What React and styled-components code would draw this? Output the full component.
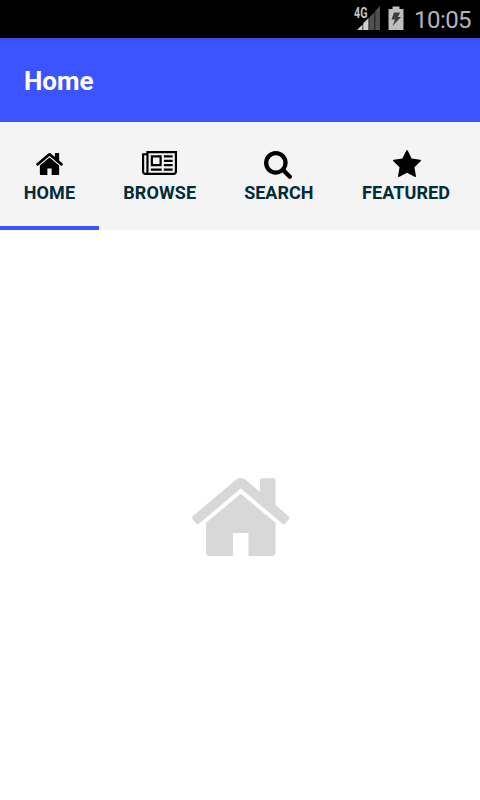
import React from "react";
import styled, { createGlobalStyle } from "styled-components";

const GlobalStyle = createGlobalStyle`
  * { box-sizing: border-box; }
  body { margin: 0; background: #fff; font-family: Roboto, sans-serif; overflow: hidden; }
`;

const Screen = styled.div`
  width: 480px;
  height: 800px;
  display: flex;
  flex-direction: column;
  background: #fff;
`;

const StatusBar = styled.div`
  height: 38px;
  flex: none;
  background: #000;
  display: flex;
  justify-content: flex-end;
  padding: 5px 9px 0 0;
`;

const SignalIcon = styled.svg`
  width: 28px;
  height: 26px;
  margin-right: 7px;
`;

const BatteryIcon = styled.svg`
  width: 16px;
  height: 26px;
  margin-right: 10px;
`;

const Clock = styled.span`
  width: 57px;
  font-size: 24px;
  line-height: 30px;
  letter-spacing: -0.55px;
  white-space: nowrap;
  color: #b4b4b4;
`;

const AppBar = styled.header`
  height: 84px;
  flex: none;
  display: flex;
  align-items: center;
  padding: 1px 24px 0;
  background: linear-gradient(#354ae0 0, #3a50f2 2px, #3c54ff 6px);
`;

const Title = styled.h1`
  margin: 0;
  font-size: 26px;
  line-height: 32px;
  font-weight: 700;
  color: #fff;
`;

const Tabs = styled.nav`
  height: 108px;
  flex: none;
  display: flex;
  overflow: hidden;
  background: #f4f4f4;
`;

const Tab = styled.div`
  width: ${(p) => p.$width}px;
  flex: none;
  display: flex;
  flex-direction: column;
  align-items: center;
  border-bottom: 4px solid ${(p) => (p.$active ? "#3c54ff" : "transparent")};
`;

const IconSlot = styled.div`
  height: 60px;
  padding: ${(p) => p.$top}px 0 0 ${(p) => p.$left || 0}px;
`;

const Glyph = styled.svg`
  display: block;
  width: ${(p) => p.$w}px;
  height: ${(p) => p.$h}px;
  fill: ${(p) => p.$color || "#000"};
`;

const Label = styled.span`
  font-size: 18px;
  line-height: 22px;
  font-weight: 700;
  letter-spacing: ${(p) => p.$spacing}px;
  padding-left: ${(p) => p.$left || 0}px;
  color: #022c38;
`;

const Content = styled.main`
  flex: 1;
  display: flex;
  justify-content: center;
  padding: 247.5px 0 0 0.5px;
`;

const icons = {
  home: {
    box: "89 253 1614 1283",
    d: "M1472 992v480q0 26-19 45t-45 19h-384v-384h-256v384h-384q-26 0-45-19t-19-45v-480q0-1 .5-3t.5-3l575-474 575 474q1 2 1 6zm223-69l-62 74q-8 9-21 11h-3q-13 0-21-7l-692-577-692 577q-12 8-24 7-13-2-21-11l-62-74q-8-10-7-23.5t11-21.5l719-599q32-26 76-26t76 26l244 204v-195q0-14 9-23t23-9h192q14 0 23 9t9 23v408l219 182q10 8 11 21.5t-7 23.5z",
  },
  newspaper: {
    box: "0 128 2048 1408",
    d: "M1024 512h-384v384h384v-384zm128 640v128h-640v-128h640zm0-768v640h-640v-640h640zm640 768v128h-512v-128h512zm0-256v128h-512v-128h512zm0-256v128h-512v-128h512zm0-256v128h-512v-128h512zm-1536 960v-960h-128v960q0 26 19 45t45 19 45-19 19-45zm1664 0v-1088h-1536v1088q0 33-11 64h1483q26 0 45-19t19-45zm128-1216v1216q0 80-56 136t-136 56h-1664q-80 0-136-56t-56-136v-1088h256v-128h1792z",
  },
  search: {
    box: "64 128 1664 1664",
    d: "M1216 832q0-185-131.5-316.5t-316.5-131.5-316.5 131.5-131.5 316.5 131.5 316.5 316.5 131.5 316.5-131.5 131.5-316.5zm512 832q0 52-38 90t-90 38q-54 0-90-38l-343-342q-179 124-399 124-143 0-273.5-55.5t-225-150-150-225-55.5-273.5 55.5-273.5 150-225 225-150 273.5-55.5 273.5 55.5 225 150 150 225 55.5 273.5q0 220-124 399l343 343q37 37 37 90z",
  },
  star: {
    box: "64 32 1664 1587",
    d: "M1728 647q0 22-26 48l-363 354 86 500q1 7 1 20 0 21-10.5 35.5t-30.5 14.5q-19 0-40-12l-449-236-449 236q-22 12-40 12-21 0-31.5-14.5t-10.5-35.5q0-6 2-20l86-500-364-354q-25-27-25-48 0-37 56-46l502-73 225-455q19-41 49-41t49 41l225 455 502 73q56 9 56 46z",
  },
};

const Icon = ({ name, w, h, color }) => (
  <Glyph $w={w} $h={h} $color={color} viewBox={icons[name].box} preserveAspectRatio="none">
    <path d={icons[name].d} />
  </Glyph>
);

const tabs = [
  { label: "HOME", icon: "home", width: 99, w: 27, h: 22, top: 31, spacing: 0.1, active: true },
  { label: "BROWSE", icon: "newspaper", width: 120, w: 35, h: 24, top: 29, spacing: 0.1, left: 1.4 },
  { label: "SEARCH", icon: "search", width: 118, w: 28, h: 28, top: 29, spacing: 0, left: 1.6 },
  { label: "FEATURED", icon: "star", width: 138, w: 28, h: 27, top: 28, spacing: 0.05, iconLeft: 1.6 },
];

export default function App() {
  return (
    <>
      <GlobalStyle />
      <Screen>
        <StatusBar>
          <SignalIcon viewBox="0 0 28 26">
            <path d="M4 25L9.5 19.5V25Z" fill="#d0d0d0" />
            <path d="M10.2 25V18.5L15.5 13V25Z" fill="#d0d0d0" />
            <path d="M16.2 25V12.5L21.5 7V25Z M22.2 25V6L27 1V25Z" fill="#505050" />
            <text x="1" y="12.5" fontFamily="Roboto" fontWeight="700" fontSize="14" textLength="13.5" lengthAdjust="spacingAndGlyphs" fill="#c4c4c4">4G</text>
          </SignalIcon>
          <BatteryIcon viewBox="0 0 16 26">
            <path d="M4.5 1.5H11.5V4H15.5V25H0.5V4H4.5Z" fill="#bebebe" />
            <path d="M6 7.5H12L10 12H13L4.5 21L7 14.5H3.5Z" fill="#3c3c3c" />
          </BatteryIcon>
          <Clock>10:05</Clock>
        </StatusBar>
        <AppBar>
          <Title>Home</Title>
        </AppBar>
        <Tabs>
          {tabs.map((t) => (
            <Tab key={t.label} $width={t.width} $active={t.active}>
              <IconSlot $top={t.top} $left={t.iconLeft}>
                <Icon name={t.icon} w={t.w} h={t.h} />
              </IconSlot>
              <Label $spacing={t.spacing} $left={t.left}>{t.label}</Label>
            </Tab>
          ))}
        </Tabs>
        <Content>
          <Icon name="home" w={97.5} h={78.5} color="#d8d8d8" />
        </Content>
      </Screen>
    </>
  );
}
